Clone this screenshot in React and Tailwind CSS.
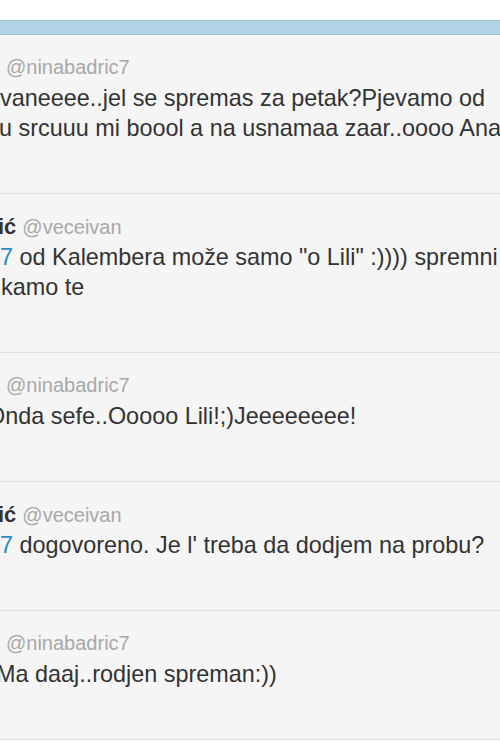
import React from 'react';

const tweets = [
  {
    name: null,
    handle: '@ninabadric7',
    handleOffset: 6,
    lines: [
      { offset: 0, parts: [{ t: 'vaneeee..jel se spremas za petak?Pjevamo od' }] },
      { offset: -1, parts: [{ t: 'u srcuuu mi boool a na usnamaa zaar..oooo Anaaa' }] },
    ],
  },
  {
    name: 'ić',
    handle: '@veceivan',
    handleOffset: -2,
    lines: [
      { offset: 0, parts: [{ t: '7', link: true }, { t: ' od Kalembera može samo "o Lili" :)))) spremni' }] },
      { offset: 1, parts: [{ t: 'kamo te' }] },
    ],
  },
  {
    name: null,
    handle: '@ninabadric7',
    handleOffset: 6,
    lines: [{ offset: -13, parts: [{ t: 'Onda sefe..Ooooo Lili!;)Jeeeeeeee!' }] }],
  },
  {
    name: 'ić',
    handle: '@veceivan',
    handleOffset: -2,
    lines: [{ offset: 0, parts: [{ t: '7', link: true }, { t: ' dogovoreno. Je l\' treba da dodjem na probu?' }] }],
  },
  {
    name: null,
    handle: '@ninabadric7',
    handleOffset: 6,
    lines: [{ offset: -4, parts: [{ t: 'Ma daaj..rodjen spreman:))' }] }],
  },
];

const Tweet = ({ tweet }) => (
  <div className="border-b border-[#e0e0e0] pt-[17px] pb-[50px]">
    <div className="h-[31px] whitespace-nowrap text-[20px] leading-[31px]" style={{ marginLeft: tweet.handleOffset }}>
      {tweet.name && <span className="mr-[6px] text-[22px] font-bold text-[#333]">{tweet.name}</span>}
      <span className="text-[#a8a8a8]">{tweet.handle}</span>
    </div>
    {tweet.lines.map((line, i) => (
      <div key={i} className="h-[30px] whitespace-nowrap text-[23.4px] leading-[30px] text-[#333]" style={{ marginLeft: line.offset }}>
        {line.parts.map((p, j) => (
          <span key={j} className={p.link ? 'text-[#2b8ac6]' : ''}>{p.t}</span>
        ))}
      </div>
    ))}
  </div>
);

export default function App() {
  return (
    <div className="h-[750px] w-[500px] overflow-hidden bg-white font-['Liberation_Sans',Arial,sans-serif]">
      <div className="h-[20px]" />
      <div className="h-[15px] border-y border-[#9cc2d6] bg-[#b1d5e7]" />
      <div className="bg-[#f5f5f5]">
        {tweets.map((t, i) => (
          <Tweet key={i} tweet={t} />
        ))}
      </div>
    </div>
  );
}
